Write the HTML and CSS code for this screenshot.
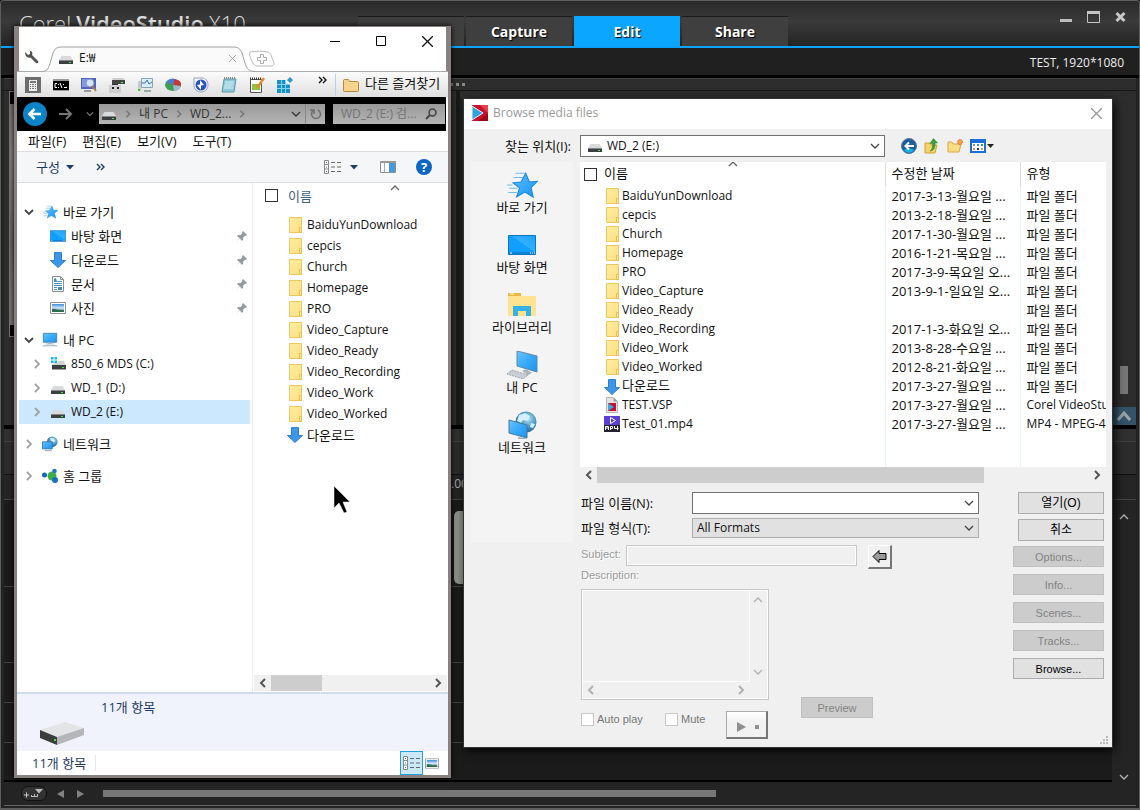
FILE: index.html
```html
<!DOCTYPE html>
<html lang="ko">
<head>
<meta charset="utf-8">
<title>Corel VideoStudio X10</title>
<link rel="stylesheet" href="styles.css">
</head>
<body>
<svg class="defs" aria-hidden="true">
  <defs>
    <linearGradient id="gBlue" x1="0" y1="0" x2="1" y2="1"><stop offset="0" stop-color="#6cc4ff"/><stop offset=".5" stop-color="#38a9fb"/><stop offset="1" stop-color="#1e93f0"/></linearGradient>
    <linearGradient id="gDesk" x1="0" y1="1" x2="1" y2="0"><stop offset="0" stop-color="#0f9bfb"/><stop offset=".55" stop-color="#12a0fd"/><stop offset=".56" stop-color="#33b0ff"/><stop offset="1" stop-color="#1ba3fd"/></linearGradient>
    <linearGradient id="gFold" x1="0" y1="0" x2="1" y2="1"><stop offset="0" stop-color="#ffeda0"/><stop offset="1" stop-color="#fddf84"/></linearGradient>
    <radialGradient id="gGlobe" cx=".6" cy=".35" r=".7"><stop offset="0" stop-color="#b8e2f4"/><stop offset=".5" stop-color="#4d9cc8"/><stop offset="1" stop-color="#1c5c8c"/></radialGradient>
    <linearGradient id="gPic" x1="0" y1="0" x2="0" y2="1"><stop offset="0" stop-color="#3d8ee0"/><stop offset=".5" stop-color="#cfe8f7"/><stop offset="1" stop-color="#2b5b72"/></linearGradient>
  </defs>
  <symbol id="folder" viewBox="0 0 16 16"><path d="M2.500.5h12v15h-12z" fill="url(#gFold)" stroke="#ecc85c"/><path d="M12.500 10.500h2v5h-2z" fill="#ffeaa0" stroke="#e6bf4e"/></symbol>
  <symbol id="drive" viewBox="0 0 16 16"><path d="M3.500 6h9l2.500 4H1z" fill="#d9dadc"/><path d="M1 10h14v4H1z" fill="#3c3f42"/><path d="M1 10h14v1H1z" fill="#85878a"/><rect x="11" y="12" width="2" height="1" fill="#3ce83c"/></symbol>
  <symbol id="windrive" viewBox="0 0 16 16"><path d="M1 1h2.500v2.500H1zM4.500 1H7v2.500H4.500zM1 4.500h2.500V7H1zM4.500 4.500H7V7H4.500z" fill="#10b8ef"/><path d="M8 5h6l1.500 4H2l2-2h4z" fill="#cfd1d3"/><path d="M2 9h14v4.500H2z" fill="#3c3f42"/><rect x="12" y="11" width="2" height="1" fill="#3ce83c"/></symbol>
  <symbol id="down" viewBox="0 0 16 16"><path d="M4.500.5h7v8h4L8 15.500.5 8.500h4z" fill="#3d97e8" stroke="#2f80cb"/></symbol>
  <symbol id="star" viewBox="0 0 30 26"><path d="M18.500 2l3.400 8.200 7.600-.6-6 5.800 2 9-7.800-4.800L10 24l2.700-8.300L6.500 11l7.600-.7z" fill="url(#gBlue)" stroke="#1789dc"/><path d="M9 2h9M7 6h9M3 16h8M2 20h8M1 13h5" stroke="#6fb9ee" stroke-width="1" fill="none"/></symbol>
  <symbol id="desktop" viewBox="0 0 28 20"><path d="M.5.500h27v19H.5z" fill="url(#gDesk)" stroke="#0b76c4"/><path d="M1 18h26" stroke="#0c67ac"/><path d="M2 18h2M22 18h1M24 18h1M26 18h1" stroke="#fff"/></symbol>
  <symbol id="doc" viewBox="0 0 16 16"><path d="M2.500.5h8l3 3v12h-11z" fill="#fff" stroke="#8a9096"/><path d="M10.500.5v3h3" fill="none" stroke="#8a9096"/><path d="M7.500 5.500H12M4 7.500h8M4 9.500h8M4 11.500h3M4 13.500h3" stroke="#4e8fc4"/><path d="M4 3l2-1 1 4H4zM8 11h4v3H8z" fill="#3a8cc8"/></symbol>
  <symbol id="picture" viewBox="0 0 16 12"><path d="M.5.500h15v11H.5z" fill="#fff" stroke="#8c9298"/><path d="M2 2h12v8H2z" fill="url(#gPic)"/><path d="M2 7c3-1 5 1 8 1s3 0 4 .5V10H2z" fill="#2f6e50"/></symbol>
  <symbol id="pin" viewBox="0 0 12 12"><path d="M7 1l4 4-1 1-1-.3L7 7.800l.2 2L6 11 3.800 8.300.5 11.500l3-3.600L1 6l1-1 2.200.2L6.400 3 6 2z" fill="#8e9aa5"/></symbol>
  <symbol id="pc" viewBox="0 0 18 16"><path d="M1.500.5h15v10h-15z" fill="url(#gBlue)" stroke="#3d7fae"/><path d="M7 11h4v1.500H7z" fill="#9fb3c0"/><path d="M4 12.500h10" stroke="#a9b9c4"/><path d="M1 14.500h16" stroke="#8ba3b4"/></symbol>
  <symbol id="net" viewBox="0 0 18 18"><circle cx="11.500" cy="6.500" r="6" fill="url(#gGlobe)"/><path d="M9 2l4 1 2 3-3 1-2-2z" fill="#d4eff7"/><path d="M.5 6.500h11v8H.5z" fill="url(#gBlue)" stroke="#3579ad"/><path d="M3 16.500h8" stroke="#7f9db2"/></symbol>
  <symbol id="home" viewBox="0 0 16 16"><circle cx="10" cy="8" r="4.500" fill="#3fae49"/><circle cx="2.500" cy="7" r="2.500" fill="#1768b4"/><circle cx="12.500" cy="3" r="2.300" fill="#2477c2"/><circle cx="13" cy="12" r="3" fill="#1b6fba"/></symbol>
  <symbol id="exp" viewBox="0 0 10 10"><path d="M3 1l4 4-4 4" fill="none" stroke="#a2a2a2" stroke-width="1.800"/></symbol>
  <symbol id="col" viewBox="0 0 10 10"><path d="M1 3l4 4 4-4" fill="none" stroke="#444" stroke-width="1.800"/></symbol>
  <symbol id="chev" viewBox="0 0 10 10"><path d="M1 3l4 4 4-4" fill="none" stroke="currentColor" stroke-width="1.300"/></symbol>
  <symbol id="up" viewBox="0 0 10 10"><path d="M1 7l4-4 4 4" fill="none" stroke="currentColor" stroke-width="1.300"/></symbol>
  <symbol id="sbl" viewBox="0 0 10 10"><path d="M7 1L3 5l4 4" fill="none" stroke="currentColor" stroke-width="2"/></symbol>
  <symbol id="sbr" viewBox="0 0 10 10"><path d="M3 1l4 4-4 4" fill="none" stroke="currentColor" stroke-width="2"/></symbol>
  <symbol id="more" viewBox="0 0 10 10"><path d="M1 2l3 3-3 3M5 2l3 3-3 3" fill="none" stroke="currentColor" stroke-width="1.400"/></symbol>
  <symbol id="tri" viewBox="0 0 8 5"><path d="M0 0h8L4 4.500z" fill="currentColor"/></symbol>
  <symbol id="close" viewBox="0 0 10 10"><path d="M0 0l10 10M10 0L0 10" fill="none" stroke="currentColor" stroke-width="1.200"/></symbol>
  <symbol id="details" viewBox="0 0 17 14"><path d="M.5.500h4v13h-4zM.5 4.500h4M.5 9h4" fill="#fff" stroke="#888"/><path d="M2 2.500h1M2 7h1M2 11.500h1M7 2.500h4M13 2.500h4M7 7h4M13 7h4M7 11.500h4M13 11.500h4" stroke="#666"/></symbol>
</svg>

<main class="app">
  <header class="titlebar">
    <h1 class="logo"><span class="thin">Corel</span><span class="heavy">VideoStudio</span><span class="thin">X10</span></h1>
    <nav class="steps">
      <button type="button">Welcome</button><button type="button">Capture</button><button type="button" class="on">Edit</button><button type="button">Share</button>
    </nav>
    <div class="syskeys">
      <button type="button" aria-label="Minimize"><svg width="12" height="12"><path d="M0 9.500h12" stroke="#bdbdbd" stroke-width="3"/></svg></button>
      <button type="button" aria-label="Maximize"><svg width="13" height="12"><path d="M.5 1h12v10.500H.5z" fill="none" stroke="#c4c4c4"/><path d="M0 1.500h13" stroke="#c4c4c4" stroke-width="3"/></svg></button>
      <button type="button" aria-label="Close"><svg width="11" height="12"><path d="M1.500 2l8 8M9.500 2l-8 8" stroke="#c8c8c8" stroke-width="3"/></svg></button>
    </div>
  </header>
  <div class="project">TEST, 1920*1080</div>
  <section class="workspace">
    <div class="grip"><i></i><i></i><i></i></div>
    <div class="panels">
      <div class="preview"><div class="clip"></div></div>
      <div class="library"></div>
      <div class="side"><span class="thumb"></span><button type="button" aria-label="Expand"><svg width="14" height="14"><path d="M1 11l6-7 6 7" fill="none" stroke="#9aa4ab" stroke-width="3"/></svg></button></div>
    </div>
  </section>
  <section class="timeline">
    <div class="tools"></div>
    <div class="ruler"><span>.00</span></div>
    <div class="tracks">
      <div class="lanes"><div class="lane film"><span class="frame"></span></div><div class="lane tall"></div><div class="lane"></div><div class="lane"></div><div class="lane rest"></div></div>
      <div class="vscroll"><svg width="12" height="10"><use href="#up"/></svg><svg width="12" height="10"><use href="#chev"/></svg></div>
    </div>
    <div class="hscroll">
      <button type="button" class="pill" aria-label="Add track"><svg width="20" height="9"><path d="M0 6h5M2.500 3.500v5" stroke="#ccc" fill="none"/><path d="M7 7.500h7M7.500 6v2M10.500 5v3M13.500 5v3" stroke="#bbb" fill="none"/><path d="M11 0h8l-4 4.500z" fill="#bbb"/></svg></button>
      <svg width="30" height="10"><path d="M9 1v8L2 5zM22 1v8l7-4z" fill="#828282"/></svg>
      <span class="bar"></span>
    </div>
  </section>
</main>

<section class="window explorer" aria-label="E:">
  <div class="tabstrip">
    <svg class="wrench" width="16" height="16"><path d="M1 2l3 3 2-1V1C8 1 9 3 8 5l6 6c1 1 0 3-2 2L6.500 7.500C3.500 8.500 1 6 1 2z" fill="#505050"/></svg>
    <div class="tab">
      <svg class="tabshape" width="212" height="26"><path d="M0 25.500c5-1 5-3 7-8C10 8 10 1 18 1h173c8 0 8 7 11 16 2 6 3 8 10 8.500" fill="#fafafa" stroke="#a0a0a0"/></svg>
      <div class="tabtext"><svg width="16" height="16"><use href="#drive"/></svg><span>E:₩</span><svg class="x" width="7" height="7"><use href="#close"/></svg></div>
    </div>
    <svg class="newtab" width="28" height="18"><path d="M2 2c5-1 14-1 18 0 3 1 4 6 6 11 0 2-1 3-3 3H9C5 16 3 9 1.500 5z" fill="#fff" stroke="#b8b8b8"/><path d="M12.500 4.500h3v3h3v3h-3v3h-3v-3h-3v-3h3z" fill="#fff" stroke="#aaa"/></svg>
    <div class="winkeys">
      <button type="button" aria-label="Minimize"><svg width="11" height="11"><path d="M0 5.500h10" stroke="#000"/></svg></button>
      <button type="button" aria-label="Maximize"><svg width="11" height="11"><path d="M.5.500h9v9h-9z" fill="none" stroke="#000"/></svg></button>
      <button type="button" aria-label="Close"><svg width="11" height="11"><use href="#close"/></svg></button>
    </div>
  </div>

  <div class="bookmarks">
    <svg width="16" height="16"><path d="M0 0h16v16H0z" fill="#6d6d6d"/><path d="M4 3h8v11H4z" fill="#eee"/><path d="M5 4h6v2H5zM5 7h1v1H5zM7 7h2v1H7zM10 7h1v1h-1zM5 9h1v1H5zM7 9h2v1H7zM10 9h1v1h-1zM5 11h1v1H5zM7 11h2v1H7zM10 11h1v1h-1z" fill="#777"/></svg>
    <svg width="16" height="16"><path d="M0 2h16v12H0z" fill="#9b9b9b"/><path d="M0 4h16v9H0z" fill="#000"/><path d="M4 6.500H2v4h2M5.500 7v1M5.500 10v1M7 6l2 5M10.500 7v1M11 10.500h3" stroke="#fff" fill="none"/></svg>
    <svg width="16" height="16"><path d="M0 1h15v11H0z" fill="#4e62c4"/><path d="M1 2h7v8H1z" fill="#8696e0"/><circle cx="9" cy="6" r="4" fill="#cfe6fa" stroke="#8794b5"/><path d="M11 9l4 5" stroke="#b07a45" stroke-width="2"/><path d="M3 14h7" stroke="#9a9a9a" stroke-width="2"/></svg>
    <svg width="16" height="16"><path d="M3 1h11l2 2H4z" fill="#cfcfcf"/><path d="M3 3h13v4H3z" fill="#444"/><rect x="12" y="5" width="2" height="1" fill="#4f4"/><path d="M3 7h6v2H3z" fill="#333"/><path d="M0 8h12v8H0z" fill="#d0d0d0"/><path d="M3 10h2v2H3zM8 10h2v2H8z" fill="#222"/></svg>
    <svg width="16" height="16"><path d="M4.500 1.500h11v9h-11z" fill="#d9eefb" stroke="#8ea2ad"/><path d="M5 6h3l2-3 2 4 3-2" stroke="#3a6ec4" fill="none"/><path d="M1 4h3v10H1z" fill="#c3cbd0"/><path d="M7 14h7" stroke="#9aa" stroke-width="2"/><rect x="1" y="12" width="2" height="2" fill="#40c040"/></svg>
    <svg width="16" height="16"><ellipse cx="8" cy="8" rx="8" ry="6" fill="#3d9e55"/><path d="M8 8L1 5c3-4 8-4 9-3z" fill="#4d7ad4"/><path d="M8 8l2-6c4 1 7 3 6 7z" fill="#c93434"/><path d="M8 8l8 1c-1 4-5 5-7 5z" fill="#9fb7c8"/></svg>
    <svg width="16" height="16"><path d="M1 1h8c4 0 6 3 6 7s-3 7-7 7-7-3-7-7z" fill="#f4f6fb" stroke="#9aa3b5"/><circle cx="8" cy="8" r="5.500" fill="#2b50c8"/><path d="M7 3l4 5-3 .5V13L4 8l3-.5z" fill="#fff"/></svg>
    <svg width="16" height="16"><path d="M3 2h12l-2 13H1z" fill="#8cc9d8" stroke="#5d97a8"/><path d="M4 5h9M4 7h9M3 9h9M3 11h9" stroke="#d6f0f5"/><path d="M3 1h12" stroke="#888" stroke-dasharray="1 1" stroke-width="2"/></svg>
    <svg width="16" height="16"><path d="M1.500 2.500h11v13h-11z" fill="#fff" stroke="#555"/><path d="M1 1.500h12" stroke="#333" stroke-dasharray="1 1" stroke-width="2"/><path d="M3 7h8v6H3z" fill="#8ec63f"/><path d="M15 1L8 11" stroke="#e38b2a" stroke-width="2.500"/></svg>
    <svg width="16" height="16"><path d="M0 3h9v4h4v9H0z" fill="#1a8fc7"/><path d="M0 7.500h13M0 11.500h13M4.500 3v13M8.500 3v13" stroke="#7fd3f5"/><path d="M13 0l3 3-3 3-3-3z" fill="#2a98ce"/></svg>
    <svg class="more" width="10" height="10"><use href="#more"/></svg>
    <span class="rule"></span>
    <svg width="16" height="16"><path d="M.5 3.500c0-1 1-1 1-1h4l1 2h8c1 0 1 .5 1 1v8c0 1-.5 1-1 1h-13c-1 0-1-.5-1-1z" fill="#f7d48c" stroke="#b5863f"/></svg>
    <a href="#other" class="ko">다른 즐겨찾기</a>
  </div>

  <div class="address">
    <button type="button" class="back" aria-label="Back"><svg width="24" height="24"><circle cx="12" cy="12" r="12" fill="#0c84c8"/><path d="M18 12H7M11.500 7L6.500 12l5 5" fill="none" stroke="#fff" stroke-width="2.500"/></svg></button>
    <svg class="fwd" width="14" height="12"><path d="M0 6h12M7 1l5 5-5 5" fill="none" stroke="#777" stroke-width="2"/></svg>
    <svg class="drop" width="8" height="8"><use href="#chev"/></svg>
    <div class="path">
      <svg width="16" height="16"><use href="#drive"/></svg><svg class="step" width="8" height="8"><use href="#sbr"/></svg><span>내 PC</span><svg class="step" width="8" height="8"><use href="#sbr"/></svg><span>WD_2...</span><svg class="step" width="8" height="8"><use href="#sbr"/></svg>
      <svg class="end" width="10" height="10"><use href="#chev"/></svg>
      <span class="cut"></span>
      <svg width="12" height="12"><path d="M4 2a4.500 4.500 0 1 0 4 0M4 6V2H0" fill="none" stroke="#6e6e6e" stroke-width="1.500"/></svg>
    </div>
    <label class="find"><input type="text" placeholder="WD_2 (E:) 검..." aria-label="검색"><svg width="12" height="12"><circle cx="7.500" cy="4.500" r="3.500" fill="none" stroke="#444" stroke-width="1.500"/><path d="M5 7l-4 4" stroke="#444" stroke-width="2"/></svg></label>
  </div>

  <nav class="menu"><button type="button">파일(F)</button><button type="button">편집(E)</button><button type="button">보기(V)</button><button type="button">도구(T)</button></nav>

  <div class="toolbar">
    <button type="button" class="org">구성 <svg width="8" height="5"><use href="#tri"/></svg></button>
    <svg class="more" width="10" height="10"><use href="#more"/></svg>
    <svg class="view" width="17" height="14"><use href="#details"/></svg>
    <svg class="viewdrop" width="8" height="5"><use href="#tri"/></svg>
    <svg class="pane" width="16" height="12"><path d="M.5.500h15v11H.5z" fill="#fff" stroke="#8c8c8c"/><path d="M0 1h16" stroke="#999" stroke-width="2"/><path d="M4.500 2v9" stroke="#aaa"/><path d="M9 2h6v9H9z" fill="#429ae0"/></svg>
    <button type="button" class="help" aria-label="Help">?</button>
  </div>

  <div class="panes">
    <ul class="tree">
      <li><svg width="10" height="10"><use href="#col"/></svg><svg width="16" height="16"><use href="#star"/></svg><span>바로 가기</span></li>
      <li class="sub"><svg width="16" height="16"><use href="#desktop"/></svg><span>바탕 화면</span><svg class="pin" width="12" height="12"><use href="#pin"/></svg></li>
      <li class="sub"><svg width="16" height="16"><use href="#down"/></svg><span>다운로드</span><svg class="pin" width="12" height="12"><use href="#pin"/></svg></li>
      <li class="sub"><svg width="16" height="16"><use href="#doc"/></svg><span>문서</span><svg class="pin" width="12" height="12"><use href="#pin"/></svg></li>
      <li class="sub"><svg width="16" height="16"><use href="#picture"/></svg><span>사진</span><svg class="pin" width="12" height="12"><use href="#pin"/></svg></li>
      <li class="group"><svg width="10" height="10"><use href="#col"/></svg><svg width="16" height="16"><use href="#pc"/></svg><span>내 PC</span></li>
      <li class="child"><svg width="10" height="10"><use href="#exp"/></svg><svg width="16" height="16"><use href="#windrive"/></svg><span class="en">850_6 MDS (C:)</span></li>
      <li class="child"><svg width="10" height="10"><use href="#exp"/></svg><svg width="16" height="16"><use href="#drive"/></svg><span class="en">WD_1 (D:)</span></li>
      <li class="child picked"><svg width="10" height="10"><use href="#exp"/></svg><svg width="16" height="16"><use href="#drive"/></svg><span class="en">WD_2 (E:)</span></li>
      <li class="group"><svg width="10" height="10"><use href="#exp"/></svg><svg width="16" height="16"><use href="#net"/></svg><span>네트워크</span></li>
      <li class="group"><svg width="10" height="10"><use href="#exp"/></svg><svg width="16" height="16"><use href="#home"/></svg><span>홈 그룹</span></li>
    </ul>
    <div class="files">
      <div class="fhead"><input type="checkbox" id="allL"><label for="allL">이름</label><svg class="sort" width="10" height="10"><use href="#up"/></svg></div>
      <ul>
        <li><svg width="16" height="16"><use href="#folder"/></svg>BaiduYunDownload</li>
        <li><svg width="16" height="16"><use href="#folder"/></svg>cepcis</li>
        <li><svg width="16" height="16"><use href="#folder"/></svg>Church</li>
        <li><svg width="16" height="16"><use href="#folder"/></svg>Homepage</li>
        <li><svg width="16" height="16"><use href="#folder"/></svg>PRO</li>
        <li><svg width="16" height="16"><use href="#folder"/></svg>Video_Capture</li>
        <li><svg width="16" height="16"><use href="#folder"/></svg>Video_Ready</li>
        <li><svg width="16" height="16"><use href="#folder"/></svg>Video_Recording</li>
        <li><svg width="16" height="16"><use href="#folder"/></svg>Video_Work</li>
        <li><svg width="16" height="16"><use href="#folder"/></svg>Video_Worked</li>
        <li class="ko"><svg width="16" height="16"><use href="#down"/></svg>다운로드</li>
      </ul>
      <div class="scroll"><svg width="10" height="10"><use href="#sbl"/></svg><span class="short"></span><svg width="10" height="10"><use href="#sbr"/></svg></div>
    </div>
  </div>

  <div class="info">
    <svg width="46" height="24"><path d="M1 9L26 1l19 6-27 9z" fill="#e3e4e6"/><path d="M18 16L45 7v7l-27 10z" fill="#b4b6b9"/><path d="M1 9l17 7v8L1 17z" fill="#3a3c3e"/><rect x="15" y="18" width="2" height="2" fill="#3de03d"/></svg>
    <span>11개 항목</span>
  </div>
  <div class="status"><span>11개 항목</span><button type="button" class="sel" aria-label="Details"><svg width="17" height="14"><use href="#details"/></svg></button><button type="button" aria-label="Thumbnails"><svg width="14" height="11" viewBox="0 0 16 12"><use href="#picture"/></svg></button></div>
</section>

<section class="window dialog" aria-label="Browse media files">
  <div class="dtitle">
    <svg width="16" height="16"><path d="M0 0h16v16H0z" fill="#c8102e"/><path d="M8 0h8v8z" fill="#e8414e"/><path d="M16 8v8H6z" fill="#9d0a14"/><path d="M0 1l11 7-11 7z" fill="#2ea3dc" stroke="#e8f4fa"/></svg>
    <h2>Browse media files</h2>
    <button type="button" aria-label="Close"><svg width="11" height="11"><use href="#close"/></svg></button>
  </div>
  <div class="lookin">
    <label for="look">찾는 위치(I):</label>
    <div class="combo"><svg width="16" height="16"><use href="#drive"/></svg><select id="look"><option>WD_2 (E:)</option></select><svg class="arrow" width="10" height="10"><use href="#chev"/></svg></div>
    <div class="acts">
      <button type="button" aria-label="Back"><svg width="16" height="16"><circle cx="8" cy="8" r="7.500" fill="#1d5ea0" stroke="#5b7893"/><path d="M3 12c3 4 8 3 10 0-3-2-7-2-10 0z" fill="#18b4e8"/><path d="M13 8H5M8 4.500L4.500 8 8 11.500" stroke="#fff" stroke-width="2" fill="none"/></svg></button>
      <button type="button" aria-label="Up"><svg width="16" height="16"><path d="M1 5h5l1 2h6l-2 8H1z" fill="#f4d36c" stroke="#cfa138"/><path d="M6 13c2-1 3-4 2.500-7.500H6L9.500.5 13.500 5H11c.5 4-1 8-5 8z" fill="#37a637" stroke="#247c24" stroke-width=".5"/></svg></button>
      <button type="button" aria-label="New folder"><svg width="16" height="16"><path d="M1 4h4l1 2h8l-2 8H1z" fill="#f8dd85" stroke="#d5a944"/><circle cx="13" cy="4" r="2.500" fill="#f7a23c" stroke="#e4533a" stroke-dasharray="1 1"/></svg></button>
      <button type="button" aria-label="View"><svg width="24" height="14"><path d="M1 1h14v12H1z" fill="#fff" stroke="#1c6fd8" stroke-width="2"/><path d="M0 1h16v3H0z" fill="#1c6fd8"/><path d="M3 5h2v2H3z" fill="#8a8ad0"/><path d="M7 5h2v2H7z" fill="#3a8fe0"/><path d="M11 5h2v2h-2z" fill="#36a036"/><path d="M3 9h2v2H3z" fill="#e88"/><path d="M7 9h2v2H7z" fill="#22339a"/><path d="M11 9h2v2h-2z" fill="#e0a040"/><path d="M17 5h7l-3.500 4z" fill="#222"/></svg></button>
    </div>
  </div>
  <div class="dbody">
    <nav class="places">
      <button type="button"><svg width="32" height="28" viewBox="0 0 30 26"><use href="#star"/></svg>바로 가기</button>
      <button type="button"><svg width="32" height="28" viewBox="-2 -4 32 28"><use href="#desktop" width="28" height="20"/></svg>바탕 화면</button>
      <button type="button"><svg width="32" height="28"><path d="M2 3h12l2 2h14v20H2z" fill="#ffe391"/><path d="M2 2h13v3H2z" fill="#e9b93c"/><path d="M4 3h4" stroke="#fff" stroke-width="1"/><path d="M7 25V15h18v10h-5v-5h-8v5z" fill="#35b1e6"/></svg>라이브러리</button>
      <button type="button"><svg width="32" height="28"><path d="M11 0l20 5v16l-20-6z" fill="url(#gBlue)" stroke="#5c87a5"/><path d="M16 20l4-2 6 4-4 2z" fill="#a8b5bf"/><path d="M1 23l5-4 16 5-5 4z" fill="#c8ced3" stroke="#9aa3aa" stroke-dasharray="2 1"/></svg>내 PC</button>
      <button type="button"><svg width="32" height="28"><circle cx="20" cy="11" r="10.500" fill="url(#gGlobe)"/><path d="M13 4l6-2 5 3-2 5-5-1-2 3-4-2zM25 12l4 1-2 4-3-1z" fill="#d3eff8"/><path d="M3 9l18 5v13L3 22z" fill="url(#gBlue)" stroke="#44789b"/><path d="M12 27l8 1" stroke="#a8b5bf" stroke-width="2"/></svg>네트워크</button>
    </nav>
    <div class="dmain">
      <div class="listing">
        <table>
          <colgroup><col><col class="cdate"><col class="ctype"></colgroup>
          <thead><tr><th><input type="checkbox" id="allR"><label for="allR">이름</label><svg class="sort" width="10" height="10"><use href="#up"/></svg></th><th>수정한 날짜</th><th>유형</th></tr></thead>
          <tbody>
            <tr><td><svg width="16" height="16"><use href="#folder"/></svg>BaiduYunDownload</td><td>2017-3-13-월요일 ...</td><td>파일 폴더</td></tr>
            <tr><td><svg width="16" height="16"><use href="#folder"/></svg>cepcis</td><td>2013-2-18-월요일 ...</td><td>파일 폴더</td></tr>
            <tr><td><svg width="16" height="16"><use href="#folder"/></svg>Church</td><td>2017-1-30-월요일 ...</td><td>파일 폴더</td></tr>
            <tr><td><svg width="16" height="16"><use href="#folder"/></svg>Homepage</td><td>2016-1-21-목요일 ...</td><td>파일 폴더</td></tr>
            <tr><td><svg width="16" height="16"><use href="#folder"/></svg>PRO</td><td>2017-3-9-목요일 오...</td><td>파일 폴더</td></tr>
            <tr><td><svg width="16" height="16"><use href="#folder"/></svg>Video_Capture</td><td>2013-9-1-일요일 오...</td><td>파일 폴더</td></tr>
            <tr><td><svg width="16" height="16"><use href="#folder"/></svg>Video_Ready</td><td></td><td>파일 폴더</td></tr>
            <tr><td><svg width="16" height="16"><use href="#folder"/></svg>Video_Recording</td><td>2017-1-3-화요일 오...</td><td>파일 폴더</td></tr>
            <tr><td><svg width="16" height="16"><use href="#folder"/></svg>Video_Work</td><td>2013-8-28-수요일 ...</td><td>파일 폴더</td></tr>
            <tr><td><svg width="16" height="16"><use href="#folder"/></svg>Video_Worked</td><td>2012-8-21-화요일 ...</td><td>파일 폴더</td></tr>
            <tr><td class="ko"><svg width="16" height="16"><use href="#down"/></svg>다운로드</td><td>2017-3-27-월요일 ...</td><td>파일 폴더</td></tr>
            <tr><td><svg width="16" height="16"><path d="M2.500.5h7l4 4v11h-11z" fill="#e4e4e4" stroke="#b5b5b5"/><path d="M9.500.5l4 4h-4z" fill="#999"/><path d="M4 6h8v8H4z" fill="#c8102e"/><path d="M4 6l6 4-6 4z" fill="#3aa6dc"/></svg>TEST.VSP</td><td>2017-3-27-월요일 ...</td><td class="en">Corel VideoStu</td></tr>
            <tr><td><svg width="16" height="16"><path d="M0 0h16v16H0z" fill="#26232e"/><path d="M0 0h16v9H0z" fill="#5b3fd0"/><path d="M6.500 1.500l5 3-5 3z" fill="none" stroke="#fff"/><path d="M1.500 14v-3.500h3V14M3 10.500V13M6.500 14v-3.500h2v2h-2M10.500 10v2.500h4M13.500 10v4" stroke="#fff" fill="none"/></svg>Test_01.mp4</td><td>2017-3-27-월요일 ...</td><td class="en">MP4 - MPEG-4</td></tr>
            <tr class="fill"><td></td><td></td><td></td></tr>
          </tbody>
        </table>
      </div>
      <div class="scroll big"><svg width="10" height="10"><use href="#sbl"/></svg><span class="long"></span><svg width="10" height="10"><use href="#sbr"/></svg></div>
      <div class="form">
        <div class="fields">
          <div class="row"><label for="fn">파일 이름(N):</label><div class="combo"><input type="text" id="fn"><svg class="arrow" width="10" height="10"><use href="#chev"/></svg></div></div>
          <div class="row"><label for="ft">파일 형식(T):</label><div class="combo gray"><select id="ft"><option>All Formats</option></select><svg class="arrow" width="10" height="10"><use href="#chev"/></svg></div></div>
          <div class="subject"><label for="sj">Subject:</label><input type="text" id="sj" disabled><button type="button" aria-label="Insert"><svg width="15" height="13"><path d="M1 6.500l6-6v3h7v6H7v3z" fill="#999" stroke="#000"/></svg></button></div>
          <div class="lower">
            <div class="desc">
              <label for="ds">Description:</label>
              <div class="box"><textarea id="ds" disabled></textarea><div class="vs"><svg width="10" height="10"><use href="#up"/></svg><svg width="10" height="10"><use href="#chev"/></svg></div><div class="hs"><svg width="10" height="10"><use href="#sbl"/></svg><svg width="10" height="10"><use href="#sbr"/></svg></div></div>
              <div class="checks"><input type="checkbox" id="ap" disabled><label for="ap">Auto play</label><input type="checkbox" id="mu" disabled><label for="mu">Mute</label><button type="button" aria-label="Play"><svg width="24" height="10"><path d="M0 0v10l9-5zM18 3h4v4h-4z" fill="#8f8f8f"/></svg></button></div>
            </div>
            <button type="button" class="btn prev" disabled>Preview</button>
          </div>
        </div>
        <div class="cmds">
          <button type="button" class="btn kr">열기(O)</button>
          <button type="button" class="btn kr">취소</button>
          <div class="wide">
            <button type="button" class="btn" disabled>Options...</button>
            <button type="button" class="btn" disabled>Info...</button>
            <button type="button" class="btn" disabled>Scenes...</button>
            <button type="button" class="btn" disabled>Tracks...</button>
            <button type="button" class="btn">Browse...</button>
          </div>
        </div>
      </div>
    </div>
  </div>
  <svg class="sizer" width="9" height="9"><path d="M6 0h2v2H6zM3 3h2v2H3zM6 3h2v2H6zM0 6h2v2H0zM3 6h2v2H3zM6 6h2v2H6z" fill="#bbb"/></svg>
</section>

<svg class="cursor" width="18" height="30"><path d="M1 1v22l5-5 5 10 3-1-4-10h7z" fill="#000" stroke="#fff" stroke-width=".5"/></svg>
</body>
</html>
```

FILE: styles.css
```css
* { box-sizing: border-box; }
html, body { height: 100%; }
body { margin: 0; overflow: hidden; position: relative; background: #1c1c1c; font: 12px/16px "Open Sans", "Noto Sans CJK KR", sans-serif; color: #111; }
button, input, select, textarea { font: inherit; color: inherit; padding: 0; margin: 0; border: 0; background: none; border-radius: 0; appearance: none; outline: 0; }
button { display: block; }
ul { list-style: none; margin: 0; padding: 0; }
h1, h2 { margin: 0; font-weight: 400; }
svg { display: block; flex: none; }
a { color: inherit; text-decoration: none; }
.defs { position: absolute; width: 0; height: 0; }
.ko { font-size: 13px; }

/* editor behind the windows */
.app { display: flex; flex-direction: column; height: 100%; border: 1px solid #5e5e5e; border-width: 1px 1px 2px; background: #222; border-radius: 4px 4px 0 0; }
.titlebar { display: flex; height: 47px; border-bottom: 2px solid #0aa2fb; background: linear-gradient(#2a2a2a, #3a3a3a 45%, #242424); border-radius: 4px 4px 0 0; }
.logo { display: flex; gap: 5px; width: 357px; padding: 8px 0 0 18px; font: 22px/28px "Open Sans", sans-serif; color: #ddd; white-space: nowrap; }
.thin { font-weight: 300; }
.heavy { font-weight: 600; }
.steps { display: flex; gap: 2px; padding-top: 15px; }
.steps button { width: 106px; height: 30px; background: #3f3f3f; border-top: 1px solid #1a1a1a; color: #fff; font: bold 14px/26px "Open Sans", sans-serif; text-shadow: 1px 1px 1px #000; }
.steps .on { background: #0aa6ff; border-color: #0aa6ff; }
.syskeys { display: flex; gap: 15px; margin-left: auto; padding: 10px 13px 0 0; align-items: flex-start; }
.project { height: 30px; padding-right: 15px; border-bottom: 3px solid #000; background: #202020; color: #eee; line-height: 29px; text-align: right; }
.workspace { display: flex; flex-direction: column; height: 347px; margin: 0 3px; background: #2d2d2d; border-top: 1px solid #444; }
.grip { display: flex; gap: 3px; padding: 4px 0 4px 446px; }
.grip i { width: 3px; height: 3px; background: #888; }
.panels { display: flex; flex: 1; border-top: 1px solid #161616; }
.preview { width: 456px; padding-left: 5px; border-right: 4px solid #191919; }
.clip { width: 300px; height: 246px; border: 1px solid #777; background: linear-gradient(#000 12px, #6f6e6a 12px, #84837e 60px, #66645f 150px, #7a786f 233px, #000 233px); }
.library { flex: 1; margin-top: 7px; border-left: 2px solid #222; }
.side { width: 24px; display: flex; flex-direction: column; align-items: center; justify-content: flex-end; }
.side .thumb { width: 8px; height: 28px; margin-bottom: 13px; background: #777; }
.side button { width: 24px; height: 18px; padding-left: 5px; background: #33536a; }
.timeline { display: flex; flex-direction: column; flex: 1; margin: 0 3px; border-top: 4px solid #000; background: #242424; }
.tools { height: 46px; border-bottom: 1px solid #111; background: linear-gradient(#303030 12px, #555 12px, #2c2c2c 13px); }
.ruler { height: 24px; padding-left: 447px; background: #252525; color: #aaa; line-height: 18px; }
.tracks { display: flex; flex: 1; border-top: 1px solid #444; }
.lanes { display: flex; flex: 1; flex-direction: column; background: #1b1b1b; border-bottom: 2px solid #000; }
.lane { height: 40px; border-bottom: 1px solid #444; }
.film { height: 87px; padding: 11px 0 0 450px; }
.frame { display: block; width: 90px; height: 73px; border-radius: 5px; background: #8d9188; }
.tall { height: 76px; }
.rest { flex: 1; border: 0; }
.vscroll { display: flex; flex-direction: column; justify-content: space-between; width: 24px; padding: 12px 6px 0; color: #b5b5b5; }
.hscroll { display: flex; align-items: center; height: 24px; padding-left: 17px; gap: 8px; border-bottom: 1px solid #666; margin-bottom: 2px; }
.pill { padding: 2px; border: 1px solid #111; border-radius: 7px; background: #333; }
.hscroll .bar { width: 55%; height: 7px; margin-left: 10px; background: #777; }

/* explorer window */
.window { position: absolute; display: flex; flex-direction: column; background: #fff; }
.explorer { left: 14px; top: 26px; bottom: 32px; width: 437px; border: 1px solid #87817f; border-width: 1px 3px 3px; box-shadow: 0 0 5px #000; font-size: 13px; }
.tabstrip { display: flex; align-items: flex-end; height: 44px; border: solid #87817f; border-width: 0 2px; }
.wrench { margin: 0 3px 5px 5px; }
.tab { position: relative; width: 210px; height: 25px; }
.tabshape { position: absolute; left: 0; top: 0; }
.tabtext { position: relative; display: flex; align-items: center; height: 24px; padding: 0 17px 0 15px; gap: 5px; font-size: 12px; }
.tabtext .x { margin-left: auto; color: #999; }
.newtab { margin-bottom: 3px; margin-left: -5px; }
.winkeys { display: flex; gap: 35px; align-self: flex-start; margin: 9px 13px 0 auto; }
.bookmarks { display: flex; align-items: center; gap: 12px; height: 26px; padding: 0 10px 0 8px; border-top: 1px solid #aaa; background: linear-gradient(#fbfbfb, #dfdfdf); }
.bookmarks .more { margin: 0 0 10px 13px; }
.bookmarks .rule { width: 1px; height: 22px; background: #bbd0e8; margin: 0 -5px; }
.bookmarks a { margin: -4px -8px 0 -6px; white-space: nowrap; }
.address { display: flex; align-items: center; height: 34px; margin-right: 2px; padding: 0 1px 0 6px; background: #000; }
.fwd { margin-left: 12px; }
.drop { margin: 0 5px 0 13px; color: #888; }
.path, .find { display: flex; align-items: center; height: 20px; background: linear-gradient(#999, #b5b5b5); color: #333; font-size: 12px; }
.path { flex: 1; gap: 7px; padding: 0 3px 0 2px; white-space: nowrap; }
.path .step { color: #777; }
.path .end { margin-left: auto; }
.path .cut { width: 1px; height: 20px; margin: 0 -3px; background: #888; }
.find { width: 112px; margin-left: 8px; padding: 0 8px; }
.find input { flex: 1; min-width: 0; }
.find input::placeholder { color: #747474; opacity: 1; }
.menu { display: flex; gap: 16px; height: 20px; padding-left: 11px; }
.toolbar { display: flex; align-items: center; height: 32px; padding: 0 16px 0 19px; border: solid #dedede; border-width: 1px 0; background: #f5f6f8; color: #1f3b63; }
.org { display: flex; align-items: center; gap: 6px; }
.toolbar .more { margin-left: 22px; }
.view { margin-left: auto; }
.viewdrop { margin: 0 22px 0 9px; }
.help { width: 16px; height: 16px; margin-left: 20px; border-radius: 50%; background: #0b66c3; color: #fff; font: bold 13px/16px "Open Sans", sans-serif; }
.panes { display: flex; flex: 1; min-height: 0; }
.tree { width: 236px; padding-top: 17px; border-right: 1px solid #ececec; }
.tree li { display: flex; align-items: center; gap: 4px; height: 24px; margin: 0 2px; padding-left: 5px; }
.tree li > svg:first-child { margin-right: 4px; }
.tree li.sub { padding-left: 31px; }
.tree li.sub > svg:first-child { margin-right: 0; }
.tree li.child { padding-left: 13px; }
.tree li.group { margin-top: 8px; }
.tree li.picked { background: #cce8ff; }
.tree li > span { padding-left: 1px; }
.en { font-size: 12px; }
.tree .pin { margin: 0 2px 0 auto; }
.files { position: relative; display: flex; flex: 1; flex-direction: column; font-size: 12px; }
.fhead { display: flex; align-items: center; gap: 10px; height: 25px; padding: 0 0 0 12px; color: #48607a; font-size: 13px; }
input[type=checkbox] { width: 13px; height: 13px; border: 1px solid #333; background: #fff; }
.sort { position: absolute; top: 0; color: #666; }
.fhead .sort { left: 137px; }
.files ul { flex: 1; padding-top: 6px; }
.files li { display: flex; align-items: center; gap: 4px; height: 21px; padding-left: 34px; }
.scroll { display: flex; align-items: center; height: 16px; margin: 0 1px 1px; padding: 0 4px; background: #f0f0f0; color: #555; }
.scroll span { height: 16px; margin: 0 auto 0 3px; background: #cdcdcd; }
.short { width: 51px; }
.long { width: 387px; }
.info { position: relative; display: flex; gap: 16px; height: 59px; padding: 5px 0 0 22px; border-top: 2px solid #cfdcf0; background: #f0f3fb; color: #1f3b63; }
.info svg { margin-top: 22px; }
.status { display: flex; align-items: center; height: 24px; padding: 0 7px 0 15px; color: #1f3b63; }
.status span { padding-right: 9px; border-right: 1px solid #e6e6e6; margin-right: auto; }
.status button { padding: 4px 2px; }
.status .sel { padding: 4px 2px; border: 1px solid #26a0da; background: #cbe8f6; }

/* media dialog */
.dialog { left: 464px; right: 28px; top: 99px; bottom: 63px; background: #f0f0f0; box-shadow: 0 0 0 1px #333, 2px 3px 10px #000; }
.dtitle { display: flex; align-items: center; gap: 5px; height: 30px; padding: 0 10px 2px 8px; background: #fff; color: #999; }
.dtitle h2 { font-size: 12px; line-height: 16px; }
.dtitle button { margin-left: auto; }
.lookin { display: flex; align-items: center; height: 33px; padding-left: 7px; }
.lookin > label { width: 109px; padding-right: 9px; text-align: right; font-size: 13px; }
.combo { display: flex; align-items: center; height: 22px; padding: 0 4px; border: 1px solid #707070; background: #fff; color: #111; }
.combo select, .combo input { flex: 1; min-width: 0; height: 18px; }
.combo .arrow { color: #444; }
.lookin .combo { width: 305px; padding-left: 6px; gap: 4px; }
.acts { display: flex; gap: 7px; margin-left: 16px; align-items: center; }
.dbody { display: flex; flex: 1; padding: 0 6px 0 7px; gap: 7px; align-items: stretch; }
.places { width: 102px; height: 380px; padding-top: 9px; background: #f4f4f4; font-size: 13px; }
.places button { display: flex; flex-direction: column; align-items: center; width: 100%; height: 60px; }
.dmain { flex: 1; min-width: 0; display: flex; flex-direction: column; }
.listing { height: 305px; overflow: hidden; background: #fff; }
table { width: 100%; height: 100%; table-layout: fixed; border-collapse: collapse; font-size: 13px; }
.cdate { width: 135px; }
.ctype { width: 86px; }
th { position: relative; height: 24px; padding: 0 0 2px 6px; font-weight: 400; text-align: left; border-left: 1px solid #ddd; }
td { height: 19px; padding: 0 0 0 6px; border-left: 1px solid #e8f1fb; white-space: nowrap; overflow: hidden; line-height: 18px; }
th:first-child { padding-left: 4px; border: 0; }
td:first-child { padding-left: 24px; border: 0; }
td:first-child:not(.ko), td.en { font-size: 12px; }
td svg { display: inline-block; vertical-align: middle; margin-right: 2px; }
th input { vertical-align: middle; margin-right: 7px; }
th .sort { left: 148px; top: -3px; }
tr.fill td { height: auto; }
.scroll.big { margin: 0; background: #f0f0f0; }
.form { display: flex; justify-content: space-between; padding: 9px 1px 0; }
.fields { width: 398px; }
.row { display: flex; align-items: center; height: 22px; margin-bottom: 3px; }
.row label { width: 111px; font-size: 13px; }
.row .combo { flex: 1; }
.row .gray { height: 20px; background: #e1e1e1; border-color: #adadad; }
.subject { display: flex; align-items: flex-start; margin-top: 6px; color: #999; font: 11px/18px "Liberation Sans", sans-serif; }
.subject label { width: 45px; text-shadow: 1px 1px #fff; }
.subject input { width: 231px; height: 21px; border: 1px solid #c8c8c8; box-shadow: inset 0 0 0 1px #fff; }
.subject button { width: 24px; height: 24px; margin-left: 11px; padding: 4px 3px; border: 1px solid #fff; border-right: 2px solid #777; border-bottom: 2px solid #777; }
.lower { display: flex; align-items: flex-end; gap: 32px; color: #999; font: 11px/16px "Liberation Sans", sans-serif; }
.desc { width: 188px; }
.desc > label { display: block; margin: -2px 0 6px; text-shadow: 1px 1px #fff; }
.box { display: grid; grid-template: 92px 16px / 1fr 18px; height: 111px; border: 1px solid #c8c8c8; box-shadow: inset 0 0 0 1px #fff; color: #b0b0b0; }
.box textarea { width: 100%; height: 92px; resize: none; border: solid #fff; border-width: 0 1px 1px 0; }
.vs { display: flex; flex-direction: column; justify-content: space-between; padding: 5px 3px; }
.hs { display: flex; justify-content: space-between; padding: 3px 4px; }
.checks { display: flex; align-items: center; width: 188px; padding-top: 11px; color: #777; white-space: nowrap; }
.checks input { flex: none; border-color: #c8c8c8; margin-right: 3px; margin-bottom: 12px; }
.checks label { margin-bottom: 12px; }
.checks label[for=ap] { width: 68px; }
.checks label[for=mu] { width: 45px; }
.checks button { flex: none; width: 42px; height: 28px; padding: 5px 0 0 10px; border: 1px solid #aaa; border-right: 2px solid #777; border-bottom: 2px solid #777; background: linear-gradient(#fff, #f2f2f2 40%); }
.btn { height: 21px; border: 1px solid #adadad; background: #e1e1e1; font: 11px/18px "Liberation Sans", sans-serif; color: #000; }
.btn:disabled { border-color: #bfbfbf; background: #ccc; color: #838383; }
.prev { width: 72px; margin-bottom: 21px; }
.cmds { display: flex; flex-direction: column; align-items: flex-end; gap: 5px; width: 91px; margin-right: 1px; }
.kr { width: 86px; height: 22px; font: 12px/18px "Liberation Sans", "Noto Sans CJK KR", sans-serif; }
.wide { display: flex; flex-direction: column; gap: 7px; width: 100%; }
.sizer { position: absolute; right: 3px; bottom: 2px; }
.cursor { position: absolute; left: 333px; top: 485px; }
```
